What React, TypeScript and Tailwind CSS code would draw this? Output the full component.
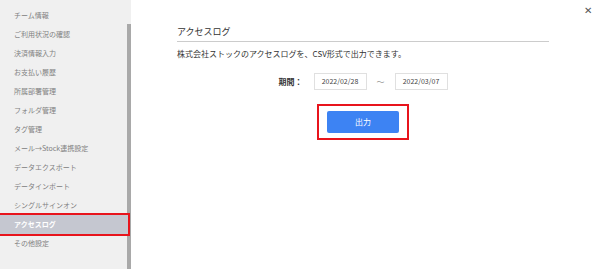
import React from "react";

const MENU = [
  "チーム情報",
  "ご利用状況の確認",
  "決済情報入力",
  "お支払い履歴",
  "所属部署管理",
  "フォルダ管理",
  "タグ管理",
  "メール→Stock連携設定",
  "データエクスポート",
  "データインポート",
  "シングルサインオン",
  "アクセスログ",
  "その他設定",
];

const ACTIVE = "アクセスログ";

function Sidebar() {
  return (
    <div className="flex h-[269px] w-[131px] shrink-0 bg-[#f0f0f0]">
      <div className="flex w-[127px] flex-col pt-[6px]">
        {MENU.map((label) => (
          <div
            key={label}
            className={
              label === ACTIVE
                ? "relative z-10 flex h-[19px] w-[128px] items-center bg-[#c5c7d0] pl-[14px] text-[7px] font-bold text-white outline-2 outline-[#e8141c]"
                : "flex h-[19px] items-center pl-[14px] text-[7px] text-[#808080]"
            }
          >
            {label}
          </div>
        ))}
      </div>
      <div className="mt-[24px] w-[4px] bg-[#a9a9a9]" />
    </div>
  );
}

export default function App() {
  return (
    <div
      className="flex h-[269px] w-[600px] flex-col overflow-hidden bg-white"
      style={{ fontFamily: '"Noto Sans CJK JP", "Noto Sans", sans-serif' }}
    >
      <div className="h-[1px] bg-[#eeeeee]" />
      <div className="flex flex-1">
        <Sidebar />
        <div className="flex flex-1 flex-col">
          <div className="flex justify-end pr-[8px] pt-[5px]">
            <span className="text-[10px] leading-none text-[#555]">✕</span>
          </div>
          <div className="ml-[46px] mt-[11px] w-[372px]">
            <h1 className="border-b border-[#cccccc] pb-[3px] text-[9px] leading-[12px] text-[#333]">
              アクセスログ
            </h1>
            <p className="mt-[6px] text-[8px] leading-[12px] text-[#333]">
              株式会社ストックのアクセスログを、CSV形式で出力できます。
            </p>
            <div className="mt-[13px] flex items-center justify-center">
              <span className="mr-[11px] text-[8px] font-bold text-[#333]">期間：</span>
              <div className="flex h-[17px] w-[53px] items-center justify-center border border-[#e0e0e0] text-[7px] text-[#444]">
                2022/02/28
              </div>
              <span className="mx-[10px] text-[8px] text-[#999]">〜</span>
              <div className="flex h-[17px] w-[53px] items-center justify-center border border-[#e0e0e0] text-[7px] text-[#444]">
                2022/03/07
              </div>
            </div>
            <div className="mt-[14px] flex justify-center">
              <div className="border-2 border-[#e8141c] px-[8px] py-[5px]">
                <button className="flex h-[22px] w-[72px] items-center justify-center rounded-[2px] bg-[#3d83f3] text-[8px] text-white">
                  出力
                </button>
              </div>
            </div>
          </div>
        </div>
      </div>
    </div>
  );
}
